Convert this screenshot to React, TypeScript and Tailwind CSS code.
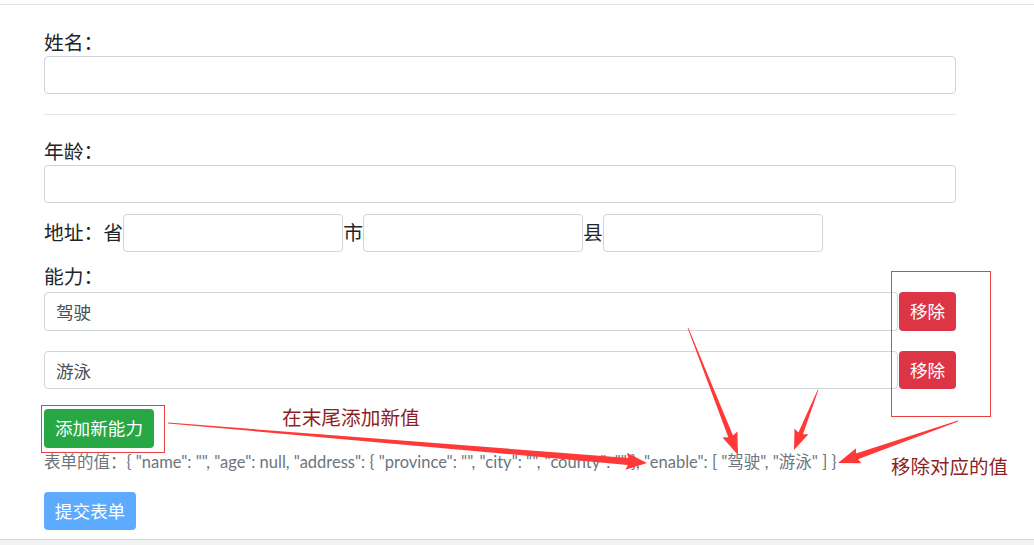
import React from "react";

type Pt = [number, number];

function arrowPoints(tail: Pt, tip: Pt, shaftW: number, headLen: number, headW: number): string {
  const dx = tip[0] - tail[0];
  const dy = tip[1] - tail[1];
  const len = Math.hypot(dx, dy);
  const ux = dx / len;
  const uy = dy / len;
  const nx = -uy;
  const ny = ux;
  const bx = tip[0] - ux * headLen;
  const by = tip[1] - uy * headLen;
  const p = (x: number, y: number) => `${x.toFixed(1)},${y.toFixed(1)}`;
  return [
    p(tail[0] + nx * 0.4, tail[1] + ny * 0.4),
    p(bx + (nx * shaftW) / 2, by + (ny * shaftW) / 2),
    p(bx - ux * 2 + (nx * headW) / 2, by - uy * 2 + (ny * headW) / 2),
    p(tip[0], tip[1]),
    p(bx - ux * 2 - (nx * headW) / 2, by - uy * 2 - (ny * headW) / 2),
    p(bx - (nx * shaftW) / 2, by - (ny * shaftW) / 2),
    p(tail[0] - nx * 0.4, tail[1] - ny * 0.4),
  ].join(" ");
}

const arrows: { tail: Pt; tip: Pt; s: number; hl: number; hw: number }[] = [
  { tail: [168, 423], tip: [647, 463], s: 7, hl: 19, hw: 17 },
  { tail: [688, 328], tip: [738, 455], s: 5, hl: 20, hw: 16 },
  { tail: [818, 390], tip: [794, 450], s: 5, hl: 18, hw: 15 },
  { tail: [958, 421], tip: [838, 463], s: 6, hl: 20, hw: 16 },
];

export default function App() {
  return (
    <div className="relative w-[1034px] h-[545px] bg-white overflow-hidden font-['Open_Sans','Noto_Sans_CJK_SC',sans-serif] text-[#212529]">
      <div className="flex flex-col h-full">
        <div className="h-[5px] border-b border-[#e3e3e3]" />
        <div className="flex-1 px-[44px] pt-[24px]">
          <div className="w-[912px] flex flex-col">
            <label className="h-[27px] leading-[27px] text-[19.8px]">姓名：</label>
            <input className="h-[38px] w-full border border-[#ced4da] rounded-[4px] px-3 outline-none" />
            <hr className="mt-[20px] mb-[23px] border-t border-[#e6e6e6]" />
            <label className="h-[27px] leading-[27px] text-[19.8px]">年龄：</label>
            <input className="h-[38px] w-full border border-[#ced4da] rounded-[4px] px-3 outline-none" />
            <div className="mt-[11px] h-[38px] flex items-center text-[19.8px] leading-[38px]">
              <span>地址：省</span>
              <input className="h-[38px] w-[220px] border border-[#ced4da] rounded-[4px] px-3 outline-none" />
              <span>市</span>
              <input className="h-[38px] w-[220px] border border-[#ced4da] rounded-[4px] px-3 outline-none" />
              <span>县</span>
              <input className="h-[38px] w-[220px] border border-[#ced4da] rounded-[4px] px-3 outline-none" />
            </div>
            <label className="mt-[10px] h-[30px] leading-[30px] text-[19.8px]">能力：</label>
            <div className="flex h-[39px]">
              <input
                defaultValue="驾驶"
                className="flex-1 h-[39px] border border-[#ced4da] rounded-[4px] pl-[11px] text-[17.6px] text-[#495057] outline-none"
              />
              <button className="ml-[1px] w-[57px] h-[39px] rounded-[4px] bg-[#dc3545] text-white text-[17.6px]">移除</button>
            </div>
            <div className="flex h-[38px] mt-[20px]">
              <input
                defaultValue="游泳"
                className="flex-1 h-[38px] border border-[#ced4da] rounded-[4px] pl-[11px] text-[17.6px] text-[#495057] outline-none"
              />
              <button className="ml-[1px] w-[57px] h-[38px] rounded-[4px] bg-[#dc3545] text-white text-[17.6px]">移除</button>
            </div>
            <div className="mt-[20px]">
              <button className="w-[110px] h-[39px] rounded-[4px] bg-[#28a745] text-white text-[17.6px]">添加新能力</button>
            </div>
            <div className="mt-[1px] h-[26px] leading-[26px] text-[16.5px] text-[#6c757d] whitespace-nowrap font-['Lato','Noto_Sans_CJK_SC',sans-serif]">
              表单的值：{'{ "name": "", "age": null, "address": { "province": "", "city": "", "county": "" }, "enable": [ "驾驶", "游泳" ] }'}
            </div>
            <div className="mt-[17px]">
              <button className="w-[92px] h-[38px] rounded-[4px] bg-[#5cabff] text-white text-[17.6px]">提交表单</button>
            </div>
          </div>
        </div>
        <div className="h-[6px] border-t border-[#d9d9d9] bg-[#f2f2f2]" />
      </div>

      {/* annotations */}
      <div className="absolute left-[41px] top-[405px] w-[124px] h-[48px] border border-[#e8413f]" />
      <div className="absolute left-[891px] top-[271px] w-[100px] h-[146px] border border-[#e8413f]" />
      <div className="absolute left-[282px] top-[403px] text-[19.7px] leading-[28px] text-[#8e1f1f] font-['Noto_Sans_CJK_SC',sans-serif]">
        在末尾添加新值
      </div>
      <div className="absolute left-[891px] top-[452px] text-[19.5px] leading-[28px] text-[#8e1f1f] font-['Noto_Sans_CJK_SC',sans-serif]">
        移除对应的值
      </div>
      <svg className="absolute inset-0 pointer-events-none" width="1034" height="545" viewBox="0 0 1034 545">
        {arrows.map((a, i) => (
          <polygon key={i} points={arrowPoints(a.tail, a.tip, a.s, a.hl, a.hw)} fill="#ff3838" />
        ))}
      </svg>
    </div>
  );
}
